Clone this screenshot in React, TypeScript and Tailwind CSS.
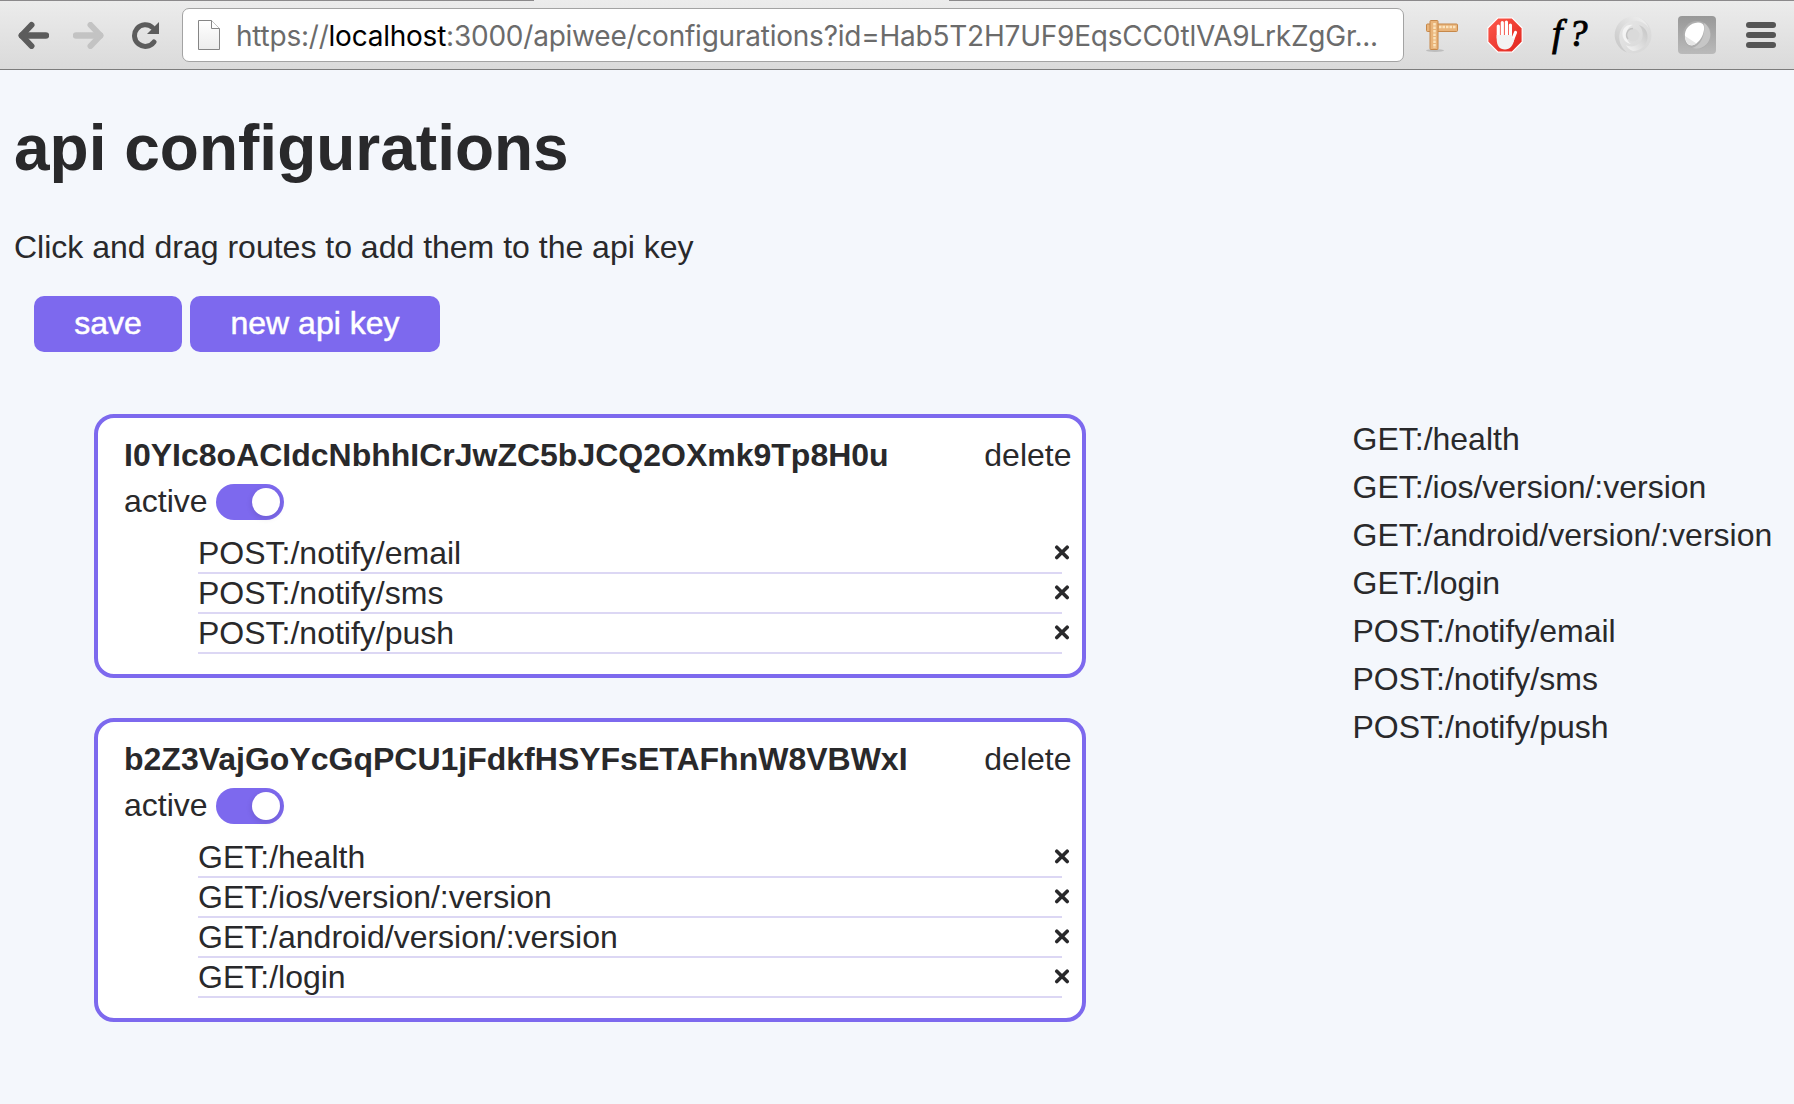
import React from "react";

type ApiKey = { id: string; routes: string[] };

const keys: ApiKey[] = [
  {
    id: "I0YIc8oACIdcNbhhICrJwZC5bJCQ2OXmk9Tp8H0u",
    routes: ["POST:/notify/email", "POST:/notify/sms", "POST:/notify/push"],
  },
  {
    id: "b2Z3VajGoYcGqPCU1jFdkfHSYFsETAFhnW8VBWxI",
    routes: ["GET:/health", "GET:/ios/version/:version", "GET:/android/version/:version", "GET:/login"],
  },
];

const routes = [
  "GET:/health",
  "GET:/ios/version/:version",
  "GET:/android/version/:version",
  "GET:/login",
  "POST:/notify/email",
  "POST:/notify/sms",
  "POST:/notify/push",
];

function BackIcon() {
  return (
    <svg width="32" height="28" viewBox="0 0 32 28" fill="none" stroke="currentColor" strokeLinecap="round">
      <path d="M5 14.500H29" strokeWidth="6.400" />
      <path d="M14.500 4L4.500 14.500L14.500 25" strokeWidth="6" strokeLinejoin="round" />
      <path d="M4 14.500L10 9V20Z" fill="currentColor" stroke="none" />
    </svg>
  );
}

function ReloadIcon() {
  return (
    <svg width="28" height="28" viewBox="0 0 28 28">
      <path d="M22 21A10.800 10.800 0 1 1 20.500 6.500" fill="none" stroke="#5c5c5c" strokeWidth="5" strokeLinecap="round" />
      <path d="M27 1V13H15Z" fill="#5c5c5c" />
    </svg>
  );
}

function PageIcon() {
  return (
    <svg width="24" height="32" viewBox="0 0 24 32">
      <defs>
        <linearGradient id="page" x1="0" y1="0" x2="0" y2="1">
          <stop offset="0" stopColor="#fff" />
          <stop offset="1" stopColor="#ececec" />
        </linearGradient>
      </defs>
      <path d="M1.500 1.500H14.500L22.500 9.500V30.500H1.500Z" fill="url(#page)" stroke="#858585" />
      <path d="M14.500 1.500V9.500H22.500" fill="#fff" stroke="#858585" />
    </svg>
  );
}

function RulerIcon() {
  return (
    <svg width="34" height="34" viewBox="0 0 34 34">
      <ellipse cx="10" cy="31.500" rx="9" ry="1.500" fill="#bdbdbd" />
      <rect x="1.500" y="5" width="31" height="7.500" rx="1" fill="#e9b47a" stroke="#c6884a" />
      <rect x="5" y="1.500" width="8" height="29" rx="1" fill="#e9b47a" stroke="#c6884a" />
      <path d="M14 8H31M9.500 4V29" stroke="#fbe3bd" strokeWidth="2.500" strokeDasharray="2.500 1" />
    </svg>
  );
}

function HandIcon() {
  return (
    <svg width="36" height="36" viewBox="0 0 36 36">
      <defs>
        <linearGradient id="stop" x1="0" y1="0" x2="1" y2="1">
          <stop offset="0" stopColor="#ff5a4c" />
          <stop offset="1" stopColor="#e0241d" />
        </linearGradient>
      </defs>
      <path d="M11 .800H25L35.200 11V25L25 35.200H11L.800 25V11Z" fill="url(#stop)" stroke="#fff" strokeWidth="1.200" />
      <g fill="none" stroke="#fff" strokeWidth="3.200" strokeLinecap="round">
        <path d="M11.300 9V21M15.300 5.500V19M19.400 5V19M23.400 8V22" />
        <path d="M28.500 15.500L25 24" />
      </g>
      <path d="M9.700 18H25V21L27.500 21.500C26 29 23 32.500 18 32.500C12.500 32.500 9.700 28.500 9.700 22Z" fill="#f3f3f3" />
    </svg>
  );
}

function SwirlIcon() {
  return (
    <svg width="38" height="38" viewBox="0 0 38 38">
      <defs>
        <linearGradient id="ring" x1="0" y1="0" x2="1" y2="1">
          <stop offset="0" stopColor="#e9e9e9" />
          <stop offset="1" stopColor="#d6d6d6" />
        </linearGradient>
        <linearGradient id="petalUpper" x1="1" y1="0" x2="0" y2="1">
          <stop offset="0" stopColor="#f3f3f3" />
          <stop offset="1" stopColor="#c4c4c4" />
        </linearGradient>
        <linearGradient id="petalLower" x1="1" y1="0" x2="0" y2="1">
          <stop offset="0" stopColor="#c2c2c2" />
          <stop offset="1" stopColor="#f5f5f5" />
        </linearGradient>
      </defs>
      <circle cx="19" cy="19" r="18.500" fill="url(#ring)" />
      <path
        d="M24 1.200A18.500 18.500 0 0 0 13 36.500C5 30 3 20 8 12C11 7 17 4 24 5C29 6 32 8 34.500 12C33 7 29 3 24 1.200Z"
        fill="url(#petalUpper)"
      />
      <path
        d="M12 29C17 32 24 30 27 25C30 20 29 13 25 9C31 11 34 16 33.500 22C33 30 26 35 19 35C16 34 13.500 32 12 29Z"
        fill="url(#petalLower)"
      />
      <path d="M14 13C11 18 12 25 17 28C12 27 8 23 8.500 17C9 11 14 8 19 9C17 9.500 15 11 14 13Z" fill="#f4f4f4" />
      <circle cx="19" cy="19" r="6.500" fill="#dadada" />
      <path d="M19 12.500A6.500 6.500 0 0 0 14 23" fill="none" stroke="#c4c4c4" strokeWidth="1.500" />
    </svg>
  );
}

function GlobeIcon() {
  return (
    <svg width="38" height="38" viewBox="0 0 38 38">
      <defs>
        <linearGradient id="tile" x1="0" y1="0" x2="0" y2="1">
          <stop offset="0" stopColor="#989898" />
          <stop offset="1" stopColor="#bababa" />
        </linearGradient>
      </defs>
      <rect width="38" height="38" rx="4" fill="url(#tile)" />
      <circle cx="19" cy="19" r="14" fill="#aeaeae" />
      <path d="M26 7A14 14 0 0 1 14 32C22 30 28 20 26 7Z" fill="#c6c6c6" />
      <path d="M7 21C6 13 12 7 20 6.500C27 6.500 27 12 25 18C23 24 18 29 14 29.500C10 29.500 7.500 26 7 21Z" fill="#fff" />
      <path d="M7 20L18.500 27.500C13 31 8 28.500 7 21Z" fill="#e6e6e6" />
    </svg>
  );
}

function Toolbar() {
  return (
    <div className="flex h-[70px] flex-col border-b border-[#7c7c7c] bg-linear-to-b from-[#ececec] to-[#dadada]">
      <div className="flex h-px justify-between">
        <div className="w-[534px] bg-[#8b898b]" />
        <div className="w-[845px] bg-[#8b898b]" />
      </div>
      <div className="flex items-start pt-[7px]">
        <div className="ml-[17px] mt-[13px] text-[#5c5c5c]">
          <BackIcon />
        </div>
        <div className="ml-[24px] mt-[13px] -scale-x-100 text-[#c3c3c3]">
          <BackIcon />
        </div>
        <div className="ml-[27px] mt-[13px]">
          <ReloadIcon />
        </div>
        <div className="ml-[22px] flex h-[54px] w-[1222px] items-center rounded-[7px] border border-[#a3a3a3] bg-white pl-[14px]">
          <PageIcon />
          <div className="ml-[15px] mt-[2px] whitespace-nowrap font-['Inter',sans-serif] text-[28px] tracking-[-0.23px] text-[#6b6b6b]">
            https://<span className="text-black">localhost</span>:3000/apiwee/configurations?id=Hab5T2H7UF9EqsCC0tlVA9LrkZgGr...
          </div>
        </div>
        <div className="ml-[21px] mt-[11px]">
          <RulerIcon />
        </div>
        <div className="ml-[28px] mt-[9px]">
          <HandIcon />
        </div>
        <div className="ml-[29px] mt-[3px] w-[38px] whitespace-nowrap font-['Liberation_Serif',serif] text-[38px] leading-[44px] tracking-[6px] text-black italic [-webkit-text-stroke:0.9px_black]">
          f?
        </div>
        <div className="ml-[24px] mt-[8px]">
          <SwirlIcon />
        </div>
        <div className="ml-[26px] mt-[8px]">
          <GlobeIcon />
        </div>
        <div className="ml-[30px] mt-[14px] flex flex-col gap-1">
          <div className="h-[6px] w-[30px] rounded-full bg-[#555]" />
          <div className="h-[6px] w-[30px] rounded-full bg-[#555]" />
          <div className="h-[6px] w-[30px] rounded-full bg-[#555]" />
        </div>
      </div>
    </div>
  );
}

function KeyCard({ item }: { item: ApiKey }) {
  return (
    <section className="w-[992px] rounded-[20px] border-4 border-[#7d69ee] bg-white pt-[18px] pr-[10.5px] pb-5 pl-[26px]">
      <div className="flex justify-between leading-[38px]">
        <strong>{item.id}</strong>
        <span>delete</span>
      </div>
      <div className="mt-[10px] flex h-9 items-start gap-2">
        <span className="leading-[34px]">active</span>
        <div className="flex h-9 w-[68px] justify-end rounded-full bg-[#7d69ee] p-1">
          <div className="size-7 rounded-full bg-white shadow-[0_2px_6px_rgba(0,0,0,0.12)]" />
        </div>
      </div>
      <ul className="mt-[14px] ml-[74px] w-[864px]">
        {item.routes.map((route) => (
          <li key={route} className="flex h-10 justify-between border-b-2 border-[#dcd7f4] leading-[38px]">
            <span>{route}</span>
            <svg
              className="-mr-2 mt-[10px]"
              width="16"
              height="16"
              viewBox="0 0 16 16"
              stroke="#29292b"
              strokeWidth="3.600"
              strokeLinecap="round"
            >
              <path d="M2.800 3.200L13.200 13.600M13.200 3.200L2.800 13.600" />
            </svg>
          </li>
        ))}
      </ul>
    </section>
  );
}

export default function App() {
  return (
    <div className="h-[1104px] overflow-hidden bg-[#f4f7fc] font-['Liberation_Sans',Arial,sans-serif] text-[32px] text-[#29292b]">
      <Toolbar />
      <main>
        <h1 className="mt-[42px] ml-[14px] text-[64px] leading-[72px] font-bold">api configurations</h1>
        <p className="mt-[44px] ml-[14px] leading-[38px]">Click and drag routes to add them to the api key</p>
        <div className="mt-[30px] ml-[34px] flex gap-2 text-white [-webkit-text-stroke:0.5px_white]">
          <button className="h-14 w-[148px] rounded-[10px] bg-[#7d69ee] pb-[2px]">save</button>
          <button className="h-14 w-[250px] rounded-[10px] bg-[#7d69ee] pb-[2px]">new api key</button>
        </div>
        <div className="mt-[62px] flex">
          <div className="ml-[94px] flex flex-col gap-10">
            {keys.map((item) => (
              <KeyCard key={item.id} item={item} />
            ))}
          </div>
          <ul className="mt-px ml-[266.5px] whitespace-nowrap leading-[48px]">
            {routes.map((route) => (
              <li key={route}>{route}</li>
            ))}
          </ul>
        </div>
      </main>
    </div>
  );
}
